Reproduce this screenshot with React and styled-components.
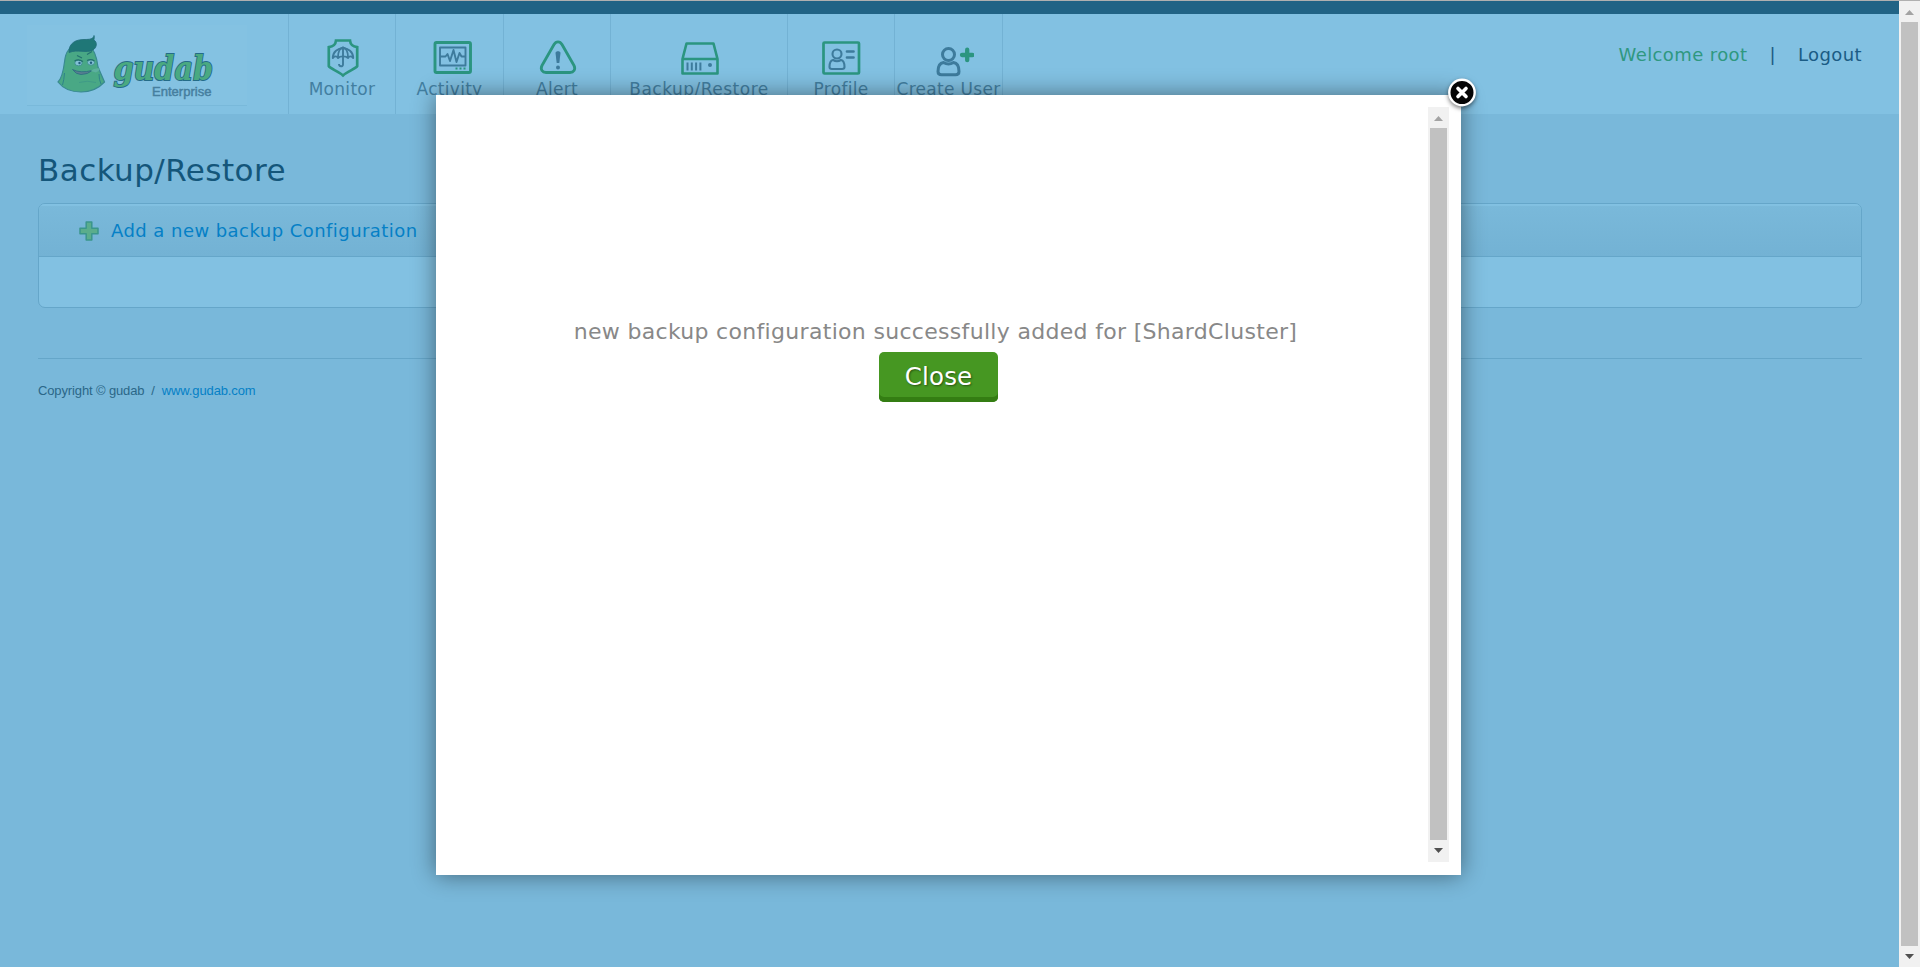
import React from "react";
import styled, { createGlobalStyle } from "styled-components";

const GlobalStyle = createGlobalStyle`
  * { box-sizing: border-box; }
  html, body { margin: 0; padding: 0; overflow: hidden; background: #79b8da; }
  body { font-family: "DejaVu Sans", Verdana, sans-serif; }
  a { color: inherit; text-decoration: none; }
`;

const Screen = styled.div`
  position: relative;
  display: flex;
  width: 1920px;
  height: 967px;
  border-top: 1px solid #b0b0b0;
  overflow: hidden;
`;

const Page = styled.div`
  flex: 1;
  display: flex;
  flex-direction: column;
  background: #79b8da;
`;

const TopBar = styled.div`
  height: 13px;
  flex: none;
  background: #216385;
`;

const Header = styled.header`
  display: flex;
  height: 100px;
  flex: none;
  background: #82c1e2;
`;

const LogoArea = styled.div`
  width: 288px;
  padding: 11px 0 0 27px;
`;

const LogoBox = styled.div`
  width: 220px;
  height: 81px;
  background: #84c2e2;
  border-bottom: 1px solid #79b9da;
`;

const Nav = styled.nav`
  display: flex;
  border-left: 1px solid #73b2d4;
`;

const NavItem = styled.a`
  display: flex;
  flex-direction: column;
  align-items: center;
  width: ${(p) => p.$width}px;
  padding-top: 22px;
  border-right: 1px solid #73b2d4;
`;

const NavLabel = styled.span`
  height: 22px;
  line-height: 22px;
  font-size: 17px;
  letter-spacing: ${(p) => p.$spacing || 0}px;
  white-space: nowrap;
  color: #427fa1;
`;

const Account = styled.div`
  margin-left: auto;
  padding: 30px 37px 0 0;
  display: flex;
  gap: 22px;
  height: 52px;
  line-height: 22px;
  font-size: 18px;
  letter-spacing: 0.4px;
  color: #1b5c85;
`;

const Welcome = styled.span`
  color: #2f9880;
`;

const Main = styled.main`
  padding: 35px 37px 0 38px;
`;

const Title = styled.h1`
  margin: 0;
  height: 54px;
  line-height: 42px;
  font-size: 31px;
  font-weight: 400;
  letter-spacing: 0.45px;
  color: #14567a;
`;

const Panel = styled.section`
  border: 1px solid #65a6c9;
  border-radius: 7px;
  height: 105px;
  background: #82c1e2;
  overflow: hidden;
`;

const PanelHead = styled.div`
  display: flex;
  align-items: center;
  gap: 12px;
  height: 53px;
  padding: 1px 0 0 40px;
  border-bottom: 1px solid #65a6c9;
  background: linear-gradient(#7ab9da, #73b2d4);
  box-shadow: inset 0 2px 1px #82c1e2;
`;

const AddLink = styled.a`
  padding-top: 1px;
  font-size: 18px;
  line-height: 24px;
  letter-spacing: 0.45px;
  color: #0580c6;
`;

const Footer = styled.footer`
  margin-top: 50px;
  padding-top: 23px;
  border-top: 1px solid #65a6c9;
  font: 13px/18px "Liberation Sans", Arial, sans-serif;
  letter-spacing: -0.13px;
  color: #2b6788;
  white-space: pre;
  a { color: #0580c6; }
`;

const Track = styled.div`
  display: flex;
  flex-direction: column;
  align-items: center;
  justify-content: space-between;
  width: 21px;
  flex: none;
  height: ${(p) => p.$height}px;
  background: #f1f1f1;
`;

const Thumb = styled.div`
  width: 17px;
  flex: 1;
  background: #c1c1c1;
`;

const ArrowCell = styled.svg`
  display: block;
  width: 21px;
  height: ${(p) => p.$height}px;
  flex: none;
`;

const Modal = styled.div`
  position: absolute;
  left: 436px;
  top: 94px;
  width: 1025px;
  height: 780px;
  padding: 12px;
  display: flex;
  background: #fff;
  box-shadow: 0 0 22px rgba(0, 0, 0, 0.46);
`;

const ModalBody = styled.div`
  flex: 1;
  display: flex;
  flex-direction: column;
  align-items: center;
  padding-top: 210px;
`;

const Message = styled.p`
  margin: 0;
  height: 35px;
  line-height: 30px;
  padding-right: 5px;
  font-size: 22px;
  letter-spacing: 0.31px;
  white-space: nowrap;
  color: #888;
`;

const CloseButton = styled.button`
  width: 119px;
  height: 50px;
  padding: 5px 0 5px 1px;
  border: 0;
  border-radius: 5px;
  background: #469722;
  box-shadow: inset 0 -5px 0 #347d13;
  font: 24.5px/40px "DejaVu Sans", Verdana, sans-serif;
  letter-spacing: 0.2px;
  color: #fff;
  text-shadow: 1px 1px 2px rgba(0, 0, 0, 0.45);
`;

const Dismiss = styled.svg`
  position: absolute;
  right: -19px;
  top: -20px;
  width: 36px;
  height: 38px;
  filter: drop-shadow(0 2px 2px rgba(0, 0, 0, 0.5));
`;

const Glyph = styled.svg`
  width: 50px;
  height: 42px;
  flex: none;
`;

function Scrollbar({ height, top, bottom }) {
  return (
    <Track $height={height}>
      <ArrowCell $height={top} viewBox={`0 0 21 ${top}`}>
        <path d={`M6 ${top - 7} L10.5 ${top - 12} L15 ${top - 7}Z`} fill="#a3a3a3" />
      </ArrowCell>
      <Thumb />
      <ArrowCell $height={bottom} viewBox={`0 0 21 ${bottom}`}>
        <path d="M6 8 L15 8 L10.5 13Z" fill="#505050" />
      </ArrowCell>
    </Track>
  );
}

const G = "#2b9580";
const B = "#3d7b9c";

const Icon = ({ dx = 0, dy = 0, children }) => (
  <Glyph viewBox={`${-4 - dx} ${-dy} 50 42`} fill="none" strokeLinejoin="round">
    {children}
  </Glyph>
);

const MonitorIcon = () => (
  <Icon dx={0.5}>
    <path d="M14.500 4.500h14c.3 3.500 2.500 6 7.200 6.700v19c-1.200 2.500-10 5.300-14.200 9.200-4.200-3.900-13-6.700-14.200-9.200V11.200c4.700-.7 6.900-3.200 7.200-6.700Z" stroke={G} strokeWidth="2.700" strokeLinejoin="miter" />
    <g stroke={B} strokeWidth="1.900">
      <path d="M11.300 22C11.300 9 31.700 9 31.700 22c-2-2.200-4-2.200-5.200 0-2-2.200-8-2.200-10 0-1.200-2.200-3.200-2.200-5.200 0Z" />
      <path d="M16.500 21c0-5 2-9 5-9.500 3 .5 5 4.500 5 9.500M21.500 10.500v18c0 2.500-4 2.500-4-.5" />
    </g>
  </Icon>
);

const ActivityIcon = () => (
  <Icon dx={3}>
    <rect x="3" y="6.500" width="35.500" height="30" rx="1.500" stroke={G} strokeWidth="2.900" />
    <rect x="8" y="11.500" width="25.500" height="18" stroke={B} strokeWidth="1.900" />
    <path d="M8 20.500h5.500l2-2.500 2.500 7 3.500-11 3 12 3-9 2 3.500H33" stroke={B} strokeWidth="1.900" />
    <path d="M23.500 32.500h2m2 0h2m2 0h2" stroke={G} strokeWidth="2.200" />
  </Icon>
);

const AlertIcon = () => (
  <Icon dx={1}>
    <path d="M17 8.500c2-3.600 6-3.600 8 0l12 21c2 4-.5 7-4 7H9c-3.500 0-6-3-4-7Z" stroke={G} strokeWidth="2.800" />
    <path d="M18.500 17c0-2.500 5-2.500 5 0l-1.200 10h-2.600Z" fill={B} />
    <circle cx="21" cy="31.500" r="2" fill={B} />
  </Icon>
);

const DriveIcon = () => (
  <Icon dx={1}>
    <path d="M3.500 23 7.500 7.500h27l4 15.500v14.500h-35ZM3.500 23h35" stroke={G} strokeWidth="2.600" />
    <path d="M8.500 26.500v8m4.300-8v8m4.300-8v8m4.300-8v8" stroke={B} strokeWidth="2" />
    <circle cx="31" cy="29" r="2" fill={B} />
  </Icon>
);

const ProfileIcon = () => (
  <Icon dx={0.5}>
    <rect x="3" y="6.500" width="35.500" height="31" rx="1" stroke={G} strokeWidth="2.700" />
    <g stroke={B} strokeWidth="2.100">
      <circle cx="16.500" cy="18" r="4.500" />
      <path d="M12.500 24q4 2.500 8 0c2.500.5 3.500 3.500 3.500 7q0 2-2.500 2h-10q-2.500 0-2.500-2c0-3.500 1-6.500 3.500-7Z" />
      <path d="M26.500 15.500h6.500M26.500 21.500h6.500" strokeWidth="2.700" strokeLinecap="round" />
    </g>
  </Icon>
);

const CreateUserIcon = () => (
  <Icon dx={6.5} dy={1}>
    <g stroke={B} strokeWidth="3">
      <circle cx="14" cy="17.500" r="6" />
      <path d="M9 25.500q5 3 10 0c4 .5 5.500 4.500 5.500 9q0 3.200-3.500 3.200H7q-3.500 0-3.500-3.200c0-4.500 1.500-8.500 5.500-9Z" />
    </g>
    <path d="M32.700 12.700v10.500M27.500 18H38" stroke={G} strokeWidth="4.300" strokeLinecap="round" />
  </Icon>
);

const navItems = [
  { label: "Monitor", width: 107, icon: MonitorIcon, spacing: 0.3 },
  { label: "Activity", width: 108, icon: ActivityIcon, spacing: 0.3 },
  { label: "Alert", width: 107, icon: AlertIcon, spacing: 0.3 },
  { label: "Backup/Restore", width: 177, icon: DriveIcon, spacing: 0.5 },
  { label: "Profile", width: 107, icon: ProfileIcon, spacing: 0.3 },
  { label: "Create User", width: 108, icon: CreateUserIcon, spacing: 0.3 },
];

const Logo = () => (
  <svg width="220" height="80" viewBox="27 25 220 80">
    <path d="M58 82c4-4 5.500-12 6.500-20C65.500 52 70 46 77 46h12c6 4 8 12 9 21l6.500 15c-6 6.500-14 10-23.500 10S63 88.500 58 82Z" fill="#49a885" stroke="#398a91" strokeWidth="1.200" />
    <path d="M69 52.500C68.500 43 76 39.500 84 39.500c6 0 9.500-.5 10-4 .5 1.500.3 3-.2 4.500 4 2 3 8-1 10-6 3.500-15-1-23.800 2.500Z" fill="#1f7777" stroke="#206b78" strokeWidth=".8" />
    <path d="M64.500 73q-.5 7-2 12M99 74q0 6 2 10" stroke="#2d838a" strokeWidth="1" fill="none" />
    <path d="M79 82.500q8-2.500 17 0" stroke="#3c9788" strokeWidth=".8" fill="none" />
    <ellipse cx="78.500" cy="63" rx="3.700" ry="2.800" fill="#82c0d5" stroke="#3a8a8c" strokeWidth=".8" />
    <ellipse cx="91" cy="62.500" rx="3.500" ry="2.700" fill="#82c0d5" stroke="#3a8a8c" strokeWidth=".8" />
    <circle cx="79.500" cy="63" r="1.200" fill="#245f80" />
    <circle cx="91" cy="62.700" r="1.200" fill="#245f80" />
    <path d="M77 55.500l5 2.500M87 54.500l5-3M74.500 61q4-2.500 8.500.5M87 60.500q4-2 7.500.5" stroke="#22706f" strokeWidth="1.100" fill="none" />
    <path d="M72.500 69.500q8 4 19.500 1-4 4-11 4-5 0-8.500-5Z" fill="#597f91" stroke="#286b80" strokeWidth=".8" />
    <path d="M90.500 71q4-3.500 9.500-2.500-1 3-4 4Z" fill="#5cb09f" />
    <text x="113.500" y="79.500" textLength="99.500" lengthAdjust="spacingAndGlyphs" fontFamily="DejaVu Serif" fontWeight="700" fontStyle="italic" fontSize="34" fill="#4aa981" stroke="#246c88" strokeWidth="2" paintOrder="stroke">gudab</text>
    <text x="152" y="95.500" textLength="59.500" lengthAdjust="spacingAndGlyphs" fontFamily="Liberation Sans" fontSize="12.500" fill="#467f9f" stroke="#467f9f" strokeWidth=".45">Enterprise</text>
  </svg>
);

const PlusIcon = () => (
  <svg width="20" height="20" viewBox="0 0 20 20">
    <path d="M7.200 1h5.600v6.200H19v5.600h-6.200V19H7.200v-6.200H1V7.200h6.200Z" fill="#5aad8c" stroke="#3b968b" strokeWidth="1.500" strokeLinejoin="round" />
  </svg>
);

export default function App() {
  return (
    <>
      <GlobalStyle />
      <Screen>
        <Page>
          <TopBar />
          <Header>
            <LogoArea>
              <LogoBox><Logo /></LogoBox>
            </LogoArea>
            <Nav>
              {navItems.map(({ label, width, icon: ItemIcon, spacing }) => (
                <NavItem key={label} $width={width}>
                  <ItemIcon />
                  <NavLabel $spacing={spacing}>{label}</NavLabel>
                </NavItem>
              ))}
            </Nav>
            <Account>
              <Welcome>Welcome root</Welcome>
              <span>|</span>
              <span>Logout</span>
            </Account>
          </Header>
          <Main>
            <Title>Backup/Restore</Title>
            <Panel>
              <PanelHead>
                <PlusIcon />
                <AddLink>Add a new backup Configuration</AddLink>
              </PanelHead>
            </Panel>
            <Footer>Copyright © gudab{"  /  "}<a>www.gudab.com</a></Footer>
          </Main>
        </Page>
        <Scrollbar height={966} top={21} bottom={21} />
        <Modal>
          <ModalBody>
            <Message>new backup configuration successfully added for [ShardCluster]</Message>
            <CloseButton>Close</CloseButton>
          </ModalBody>
          <Scrollbar height={755} top={21} bottom={22} />
          <Dismiss viewBox="0 0 36 38">
            <circle cx="18" cy="17.500" r="12.700" fill="#050505" stroke="#fff" strokeWidth="2.400" />
            <path d="M14 13.500l8 8m0-8l-8 8" stroke="#fff" strokeWidth="3.600" strokeLinecap="round" />
          </Dismiss>
        </Modal>
      </Screen>
    </>
  );
}
